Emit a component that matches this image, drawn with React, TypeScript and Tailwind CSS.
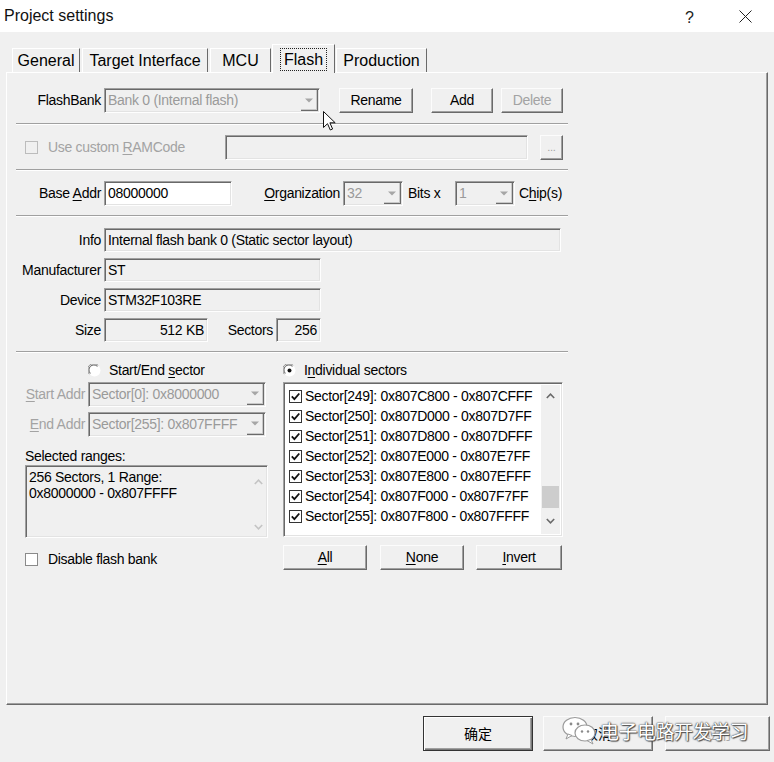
import React from "react";

const raised =
  "border border-t-[#fcfcfc] border-l-[#fcfcfc] border-r-[#6a6a6a] border-b-[#6a6a6a] shadow-[inset_-1px_-1px_0_#a0a0a0]";
const sunken =
  "border border-t-[#a0a0a0] border-l-[#a0a0a0] border-r-[#fefefe] border-b-[#fefefe] shadow-[inset_1px_1px_0_#696969,inset_-1px_-1px_0_#e3e3e3]";

function U({ children }: { children: React.ReactNode }) {
  return <span className="underline underline-offset-[2px] decoration-1">{children}</span>;
}

function Btn({
  className = "",
  disabled,
  children,
}: {
  className?: string;
  disabled?: boolean;
  children: React.ReactNode;
}) {
  return (
    <div
      className={`${raised} bg-[#f0f0f0] h-[25px] flex items-center justify-center ${
        disabled ? "text-[#a3a3a3]" : "text-black"
      } ${className}`}
    >
      {children}
    </div>
  );
}

function Arrow() {
  return (
    <svg width="8" height="5" viewBox="0 0 8 5">
      <path d="M0 0.5h8L4 4.5z" fill="#a6a6a6" />
    </svg>
  );
}

function Combo({
  className = "",
  text,
  disabled,
}: {
  className?: string;
  text: string;
  disabled?: boolean;
}) {
  return (
    <div className={`${sunken} bg-[#f0f0f0] h-[25px] flex items-stretch p-[1px] ${className}`}>
      <span
        className={`flex-1 pl-[2px] flex items-center whitespace-nowrap overflow-hidden ${
          disabled ? "text-[#9a9a9a]" : "text-black"
        }`}
      >
        {text}
      </span>
      <span className="w-[17px] flex items-center justify-center border-r border-b border-r-[#6a6a6a] border-b-[#6a6a6a] shadow-[inset_-1px_-1px_0_#c8c8c8]">
        <Arrow />
      </span>
    </div>
  );
}

function Field({
  className = "",
  children,
  white,
}: {
  className?: string;
  children?: React.ReactNode;
  white?: boolean;
}) {
  return (
    <div
      className={`${sunken} ${white ? "bg-white" : "bg-[#f0f0f0]"} flex items-center px-[3px] whitespace-nowrap ${className}`}
    >
      {children}
    </div>
  );
}

function Sep() {
  return <div className="w-[552px] h-[2px] border-t border-t-[#a0a0a0] border-b border-b-white" />;
}

function Label({ className = "", children }: { className?: string; children: React.ReactNode }) {
  return <span className={`text-right whitespace-nowrap ${className}`}>{children}</span>;
}

function Check({ checked, disabled, className = "" }: { checked?: boolean; disabled?: boolean; className?: string }) {
  return (
    <svg width="13" height="13" viewBox="0 0 13 13" className={className}>
      <rect
        x="0.5"
        y="0.5"
        width="12"
        height="12"
        fill={disabled ? "#f0f0f0" : "#ffffff"}
        stroke={disabled ? "#bcbcbc" : checked ? "#333333" : "#8a8a8a"}
      />
      {checked && <path d="M2.8 6.4l2.6 2.7 4.9-5.6" fill="none" stroke="#111" strokeWidth="1.8" />}
    </svg>
  );
}

function Radio({ checked }: { checked?: boolean }) {
  return (
    <svg width="13" height="13" viewBox="0 0 13 13">
      <circle cx="6.5" cy="6.5" r="6" fill="#ffffff" />
      <path d="M1.4 10.2A6 6 0 0 1 10.2 1.4" fill="none" stroke="#8a8a8a" strokeWidth="1" />
      <path d="M2.4 9.4A4.8 4.8 0 0 1 9.4 2.4" fill="none" stroke="#5e5e5e" strokeWidth="1" />
      {checked && <circle cx="6.5" cy="6.5" r="2" fill="#111" />}
    </svg>
  );
}

function Chevron({ up, color = "#6a6a6a" }: { up?: boolean; color?: string }) {
  return (
    <svg width="9" height="6" viewBox="0 0 9 6">
      <path d={up ? "M0.8 5L4.5 1.2 8.2 5" : "M0.8 1L4.5 4.8 8.2 1"} fill="none" stroke={color} strokeWidth="1.6" />
    </svg>
  );
}

const sectors = [
  ["249", "0x807C800", "0x807CFFF"],
  ["250", "0x807D000", "0x807D7FF"],
  ["251", "0x807D800", "0x807DFFF"],
  ["252", "0x807E000", "0x807E7FF"],
  ["253", "0x807E800", "0x807EFFF"],
  ["254", "0x807F000", "0x807F7FF"],
  ["255", "0x807F800", "0x807FFFF"],
];

function Tab({
  className = "",
  selected,
  children,
}: {
  className?: string;
  selected?: boolean;
  children: React.ReactNode;
}) {
  if (selected) {
    return (
      <div
        className={`relative z-10 -mb-[1px] h-[29px] bg-[#f0f0f0] border-l border-t border-r border-l-white border-t-white border-r-[#6a6a6a] flex items-start justify-center pt-[3px] ${className}`}
      >
        <span className="border border-dotted border-[#222] px-[3px] h-[23px] flex items-center">{children}</span>
      </div>
    );
  }
  return (
    <div
      className={`h-[24px] border-l border-t border-r border-l-white border-t-white border-r-[#6a6a6a] flex items-center justify-center ${className}`}
    >
      {children}
    </div>
  );
}

export default function App() {
  return (
    <div className="relative w-[774px] h-[762px] bg-[#f0f0f0] overflow-hidden font-['Liberation_Sans',Arial,sans-serif] text-black">
      {/* window title bar */}
      <div className="h-[32px] bg-white flex items-center relative">
        <span className="ml-[4px] text-[16px] text-[#111]">Project settings</span>
        <span className="absolute left-[685px] top-[6px] text-[16px] text-[#222]">?</span>
        <svg className="absolute left-[739px] top-[10px]" width="13" height="13" viewBox="0 0 13 13">
          <path d="M0.5 0.5L12.5 12.5M12.5 0.5L0.5 12.5" stroke="#222" strokeWidth="1" />
        </svg>
      </div>

      {/* tab strip */}
      <div className="h-[40px] flex items-end pl-[12px] text-[16px]">
        <Tab className="w-[68px]">General</Tab>
        <Tab className="w-[126px] ml-[2px]">Target Interface</Tab>
        <Tab className="w-[61px] ml-[2px]">MCU</Tab>
        <Tab selected className="w-[63px] ml-[1px]">
          Flash
        </Tab>
        <Tab className="w-[91px] ml-[1px]">Production</Tab>
      </div>

      {/* tab page */}
      <div className="ml-[6px] w-[762px] h-[633px] border border-t-white border-l-white border-r-[#6a6a6a] border-b-[#6a6a6a] shadow-[inset_-1px_-1px_0_#a0a0a0] text-[14px] tracking-[-0.3px]">
        <div className="pl-[9px] flex flex-col">
          {/* flash bank */}
          <div className="mt-[15px] h-[25px] flex items-center">
            <Label className="w-[86px] pr-[1px]">FlashBank</Label>
            <Combo className="ml-[2px] w-[216px]" text="Bank 0 (Internal flash)" disabled />
            <Btn className="ml-[19px] w-[74px]">Rename</Btn>
            <Btn className="ml-[18px] w-[62px]">Add</Btn>
            <Btn className="ml-[8px] w-[62px]" disabled>
              Delete
            </Btn>
          </div>
          <div className="mt-[10px]">
            <Sep />
          </div>

          {/* RAM code */}
          <div className="mt-[10px] h-[25px] flex items-center">
            <Check disabled className="ml-[9px]" />
            <span className="ml-[10px] w-[177px] text-[#a3a3a3] whitespace-nowrap">
              Use custom <U>R</U>AMCode
            </span>
            <Field className="w-[303px] h-[25px]" />
            <Btn className="ml-[12px] w-[23px] text-[11px]" disabled>
              ...
            </Btn>
          </div>
          <div className="mt-[9px]">
            <Sep />
          </div>

          {/* base address / organization */}
          <div className="mt-[10px] h-[25px] flex items-center">
            <Label className="w-[86px] pr-[1px]">
              Base <U>A</U>ddr
            </Label>
            <Field white className="ml-[2px] w-[128px] h-[25px]">
              08000000
            </Field>
            <Label className="w-[109px] pr-[1px]">
              <U>O</U>rganization
            </Label>
            <Combo className="ml-[2px] w-[60px]" text="32" disabled />
            <span className="ml-[5px] w-[47px] whitespace-nowrap">Bits x</span>
            <Combo className="w-[60px]" text="1" disabled />
            <span className="ml-[4px] whitespace-nowrap">
              C<U>h</U>ip(s)
            </span>
          </div>
          <div className="mt-[9px]">
            <Sep />
          </div>

          {/* device info */}
          <div className="mt-[11px] h-[24px] flex items-center">
            <Label className="w-[86px] pr-[1px]">Info</Label>
            <Field className="ml-[2px] w-[457px] h-[24px]">Internal flash bank 0 (Static sector layout)</Field>
          </div>
          <div className="mt-[6px] h-[24px] flex items-center">
            <Label className="w-[86px] pr-[1px]">Manufacturer</Label>
            <Field className="ml-[2px] w-[217px] h-[24px]">ST</Field>
          </div>
          <div className="mt-[6px] h-[24px] flex items-center">
            <Label className="w-[86px] pr-[1px]">Device</Label>
            <Field className="ml-[2px] w-[217px] h-[24px]">STM32F103RE</Field>
          </div>
          <div className="mt-[6px] h-[24px] flex items-center">
            <Label className="w-[86px] pr-[1px]">Size</Label>
            <Field className="ml-[2px] w-[104px] h-[24px] justify-end">512 KB</Field>
            <Label className="w-[68px] pr-[3px]">Sectors</Label>
            <Field className="w-[45px] h-[24px] justify-end">256</Field>
          </div>
          <div className="mt-[9px]">
            <Sep />
          </div>

          {/* sector selection */}
          <div className="flex">
            <div className="w-[267px] flex flex-col">
              <div className="mt-[9px] h-[16px] flex items-center">
                <span className="ml-[72px] flex">
                  <Radio />
                </span>
                <span className="ml-[8px] whitespace-nowrap">
                  Start/End <U>s</U>ector
                </span>
              </div>
              <div className="mt-[4px] h-[24px] flex items-center">
                <Label className="w-[70px] pr-[1px] text-[#a3a3a3]">
                  <U>S</U>tart Addr
                </Label>
                <Combo className="ml-[2px] w-[178px] h-[24px]" text="Sector[0]: 0x8000000" disabled />
              </div>
              <div className="mt-[6px] h-[24px] flex items-center">
                <Label className="w-[70px] pr-[1px] text-[#a3a3a3]">
                  <U>E</U>nd Addr
                </Label>
                <Combo className="ml-[2px] w-[178px] h-[24px]" text="Sector[255]: 0x807FFFF" disabled />
              </div>
              <div className="mt-[12px] h-[16px] flex items-center pl-[9px]">Selected ranges:</div>
              <div className={`${sunken} bg-[#f0f0f0] mt-[1px] ml-[9px] w-[243px] h-[73px] flex`}>
                <div className="flex-1 pl-[3px] pt-[3px] leading-[16px]">
                  <div>256 Sectors, 1 Range:</div>
                  <div>0x8000000 - 0x807FFFF</div>
                </div>
                <div className="w-[18px] flex flex-col items-center justify-between pt-[13px] pb-[7px]">
                  <Chevron up color="#c4c4c4" />
                  <Chevron color="#c4c4c4" />
                </div>
              </div>
              <div className="mt-[13px] h-[16px] flex items-center">
                <Check className="ml-[9px]" />
                <span className="ml-[10px] whitespace-nowrap">Disable flash bank</span>
              </div>
            </div>

            <div className="flex flex-col">
              <div className="mt-[9px] h-[16px] flex items-center">
                <Radio checked />
                <span className="ml-[8px] whitespace-nowrap">
                  I<U>n</U>dividual sectors
                </span>
              </div>
              <div className={`${sunken} bg-white mt-[4px] w-[280px] h-[155px] flex p-[2px]`}>
                <div className="flex-1 pt-[1px] pl-[3px]">
                  {sectors.map(([n, a, b]) => (
                    <div key={n} className="h-[20px] flex items-center whitespace-nowrap">
                      <Check checked />
                      <span className="ml-[3px]">
                        Sector[{n}]: {a} - {b}
                      </span>
                    </div>
                  ))}
                </div>
                <div className="w-[19px] bg-[#f0f0f0] flex flex-col items-center">
                  <div className="h-[22px] flex items-center">
                    <Chevron up />
                  </div>
                  <div className="flex-1 w-full flex flex-col justify-end">
                    <div className="h-[22px] mx-[1px] bg-[#cdcdcd]" />
                  </div>
                  <div className="h-[26px] flex items-center">
                    <Chevron />
                  </div>
                </div>
              </div>
              <div className="mt-[8px] flex">
                <Btn className="w-[84px]">
                  <U>A</U>ll
                </Btn>
                <Btn className="ml-[13px] w-[84px]">
                  <U>N</U>one
                </Btn>
                <Btn className="ml-[12px] w-[86px]">
                  <U>I</U>nvert
                </Btn>
              </div>
            </div>
          </div>
        </div>
      </div>

      {/* dialog buttons */}
      <div className="mt-[11px] ml-[423px] flex font-['Noto_Sans_CJK_SC',sans-serif] text-[14px]">
        <div className="w-[110px] h-[35px] border border-[#333] bg-[#f0f0f0] flex items-center justify-center shadow-[inset_1px_1px_0_#fff,inset_-1px_-1px_0_#7a7a7a,inset_-2px_-2px_0_#a0a0a0]">
          确定
        </div>
        <div className={`${raised} ml-[10px] w-[110px] h-[35px] bg-[#f0f0f0] flex items-center justify-center`}>
          取消
        </div>
        <div className={`${raised} ml-[12px] w-[105px] h-[35px] bg-[#f0f0f0] flex items-center justify-center text-[#a8a8a8]`}>
          应用
        </div>
      </div>

      {/* mouse pointer */}
      <svg className="absolute left-[323px] top-[111px]" width="13" height="20" viewBox="0 0 13 20">
        <path d="M0.5 0.5V16.5L4.5 12.7L7.3 19L9.6 18L6.9 11.8H12.2Z" fill="#fff" stroke="#111" strokeWidth="1" strokeLinejoin="round" />
      </svg>

      {/* watermark */}
      <div className="absolute left-[561px] top-[716px] flex items-center">
        <svg width="38" height="30" viewBox="0 0 38 30">
          <ellipse cx="14" cy="11" rx="12" ry="9.5" fill="#fff" stroke="#9a9a9a" strokeWidth="1.2" />
          <path d="M7 18L5 23L11 19.5Z" fill="#fff" stroke="#9a9a9a" strokeWidth="1" />
          <ellipse cx="24" cy="17" rx="10" ry="8" fill="#fff" stroke="#9a9a9a" strokeWidth="1.2" />
          <path d="M30 23.5L32 28L26 24.5Z" fill="#fff" stroke="#9a9a9a" strokeWidth="1" />
          <circle cx="10" cy="8" r="1.4" fill="#8a8a8a" />
          <circle cx="17" cy="8" r="1.4" fill="#8a8a8a" />
          <circle cx="21" cy="15.5" r="1.2" fill="#8a8a8a" />
          <circle cx="27" cy="15.5" r="1.2" fill="#8a8a8a" />
        </svg>
        <span className="ml-[1px] text-[19px] tracking-[-0.5px] text-white font-['Noto_Sans_CJK_SC',sans-serif] [text-shadow:0_0_1px_#333,0_0_2px_#444,1px_1px_1px_#555]">
          电子电路开发学习
        </span>
      </div>
    </div>
  );
}
